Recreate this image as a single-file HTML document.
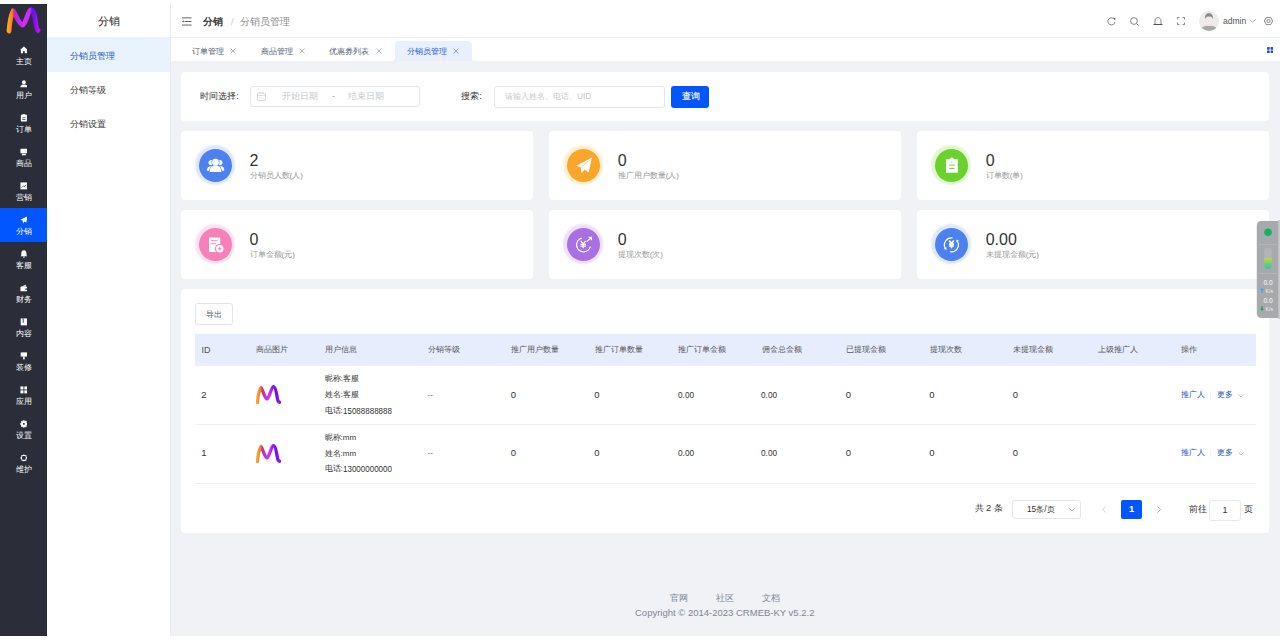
<!DOCTYPE html><html><head><meta charset="utf-8"><style>
*{box-sizing:border-box;margin:0;padding:0}
html,body{width:1280px;height:640px;overflow:hidden;background:#fff}
body{position:relative;font-family:"Liberation Sans",sans-serif;color:#333}
.a{position:absolute;white-space:nowrap}
.t{position:absolute;white-space:nowrap;line-height:1}
svg{display:block}
</style></head><body>
<div class="a" style="left:0;top:4px;width:47px;height:632px;background:#2b2e38"></div>
<svg class="a" style="left:4px;top:6px" width="40" height="30" viewBox="0 0 40 30">
<defs><linearGradient id="lg" gradientUnits="userSpaceOnUse" x1="5" y1="0" x2="34" y2="0">
<stop offset="0" stop-color="#ffa020"/><stop offset="0.12" stop-color="#f47a2a"/><stop offset="0.17" stop-color="#d42a80"/><stop offset="0.24" stop-color="#b824d8"/><stop offset="0.5" stop-color="#d42cff"/><stop offset="0.72" stop-color="#c828ff"/><stop offset="0.8" stop-color="#6412ee"/><stop offset="0.9" stop-color="#8010ee"/><stop offset="1" stop-color="#b812f4"/></linearGradient></defs>
<path d="M5 25 C5.5 18 7 9 9.25 4.75 C11.5 8 15 18.5 18.5 19 C22 18.5 24 4 27 3.75 C30 4 31 12 32 19 C32.5 22.5 33 24 34 24.5" fill="none" stroke="url(#lg)" stroke-width="4.8" stroke-linecap="round" stroke-linejoin="round"/>
</svg>
<svg class="a" style="left:19.7px;top:46px" width="7.8" height="7.8" viewBox="0 0 9 9"><path d="M4.5 0.5 L9 4.5 L8 4.5 L8 8.5 L5.5 8.5 L5.5 6 L3.5 6 L3.5 8.5 L1 8.5 L1 4.5 L0 4.5 Z" fill="#fff"/></svg>
<div class="t" style="left:0;width:47px;text-align:center;top:57.3px;font-size:8.3px;color:#fff">主页</div>
<svg class="a" style="left:19.7px;top:80px" width="7.8" height="7.8" viewBox="0 0 9 9"><circle cx="4.5" cy="2.6" r="2.2" fill="#fff"/><path d="M0.5 8.5 C0.5 5.8 2 5.2 4.5 5.2 C7 5.2 8.5 5.8 8.5 8.5 Z" fill="#fff"/></svg>
<div class="t" style="left:0;width:47px;text-align:center;top:91.3px;font-size:8.3px;color:#fff">用户</div>
<svg class="a" style="left:19.7px;top:114px" width="7.8" height="7.8" viewBox="0 0 9 9"><rect x="1" y="1" width="7" height="7.8" rx="0.8" fill="#fff"/><rect x="3" y="0.2" width="3" height="1.6" fill="#fff"/><rect x="2.6" y="4" width="3.8" height="0.8" fill="#2b2e38"/><rect x="2.6" y="5.8" width="3.8" height="0.8" fill="#2b2e38"/></svg>
<div class="t" style="left:0;width:47px;text-align:center;top:125.3px;font-size:8.3px;color:#fff">订单</div>
<svg class="a" style="left:19.7px;top:148px" width="7.8" height="7.8" viewBox="0 0 9 9"><rect x="0.5" y="0.8" width="8" height="5.4" rx="0.8" fill="#fff"/><rect x="2.2" y="6.6" width="4.6" height="1.8" fill="#fff"/></svg>
<div class="t" style="left:0;width:47px;text-align:center;top:159.3px;font-size:8.3px;color:#fff">商品</div>
<svg class="a" style="left:19.7px;top:182px" width="7.8" height="7.8" viewBox="0 0 9 9"><rect x="0.5" y="0.5" width="8" height="8" fill="#fff"/><path d="M2 6.5 L4 4.5 L5 5.5 L7 3" stroke="#2b2e38" stroke-width="0.8" fill="none"/></svg>
<div class="t" style="left:0;width:47px;text-align:center;top:193.3px;font-size:8.3px;color:#fff">营销</div>
<div class="a" style="left:0;top:208px;width:47px;height:34px;background:#0256ff"></div>
<svg class="a" style="left:19.7px;top:216px" width="7.8" height="7.8" viewBox="0 0 9 9"><path d="M8.8 0.3 L0.3 4.2 L3 5.3 L3.5 8.7 L5.2 6.3 L7.2 7.5 Z" fill="#fff"/></svg>
<div class="t" style="left:0;width:47px;text-align:center;top:227.3px;font-size:8.3px;color:#fff">分销</div>
<svg class="a" style="left:19.7px;top:250px" width="7.8" height="7.8" viewBox="0 0 9 9"><path d="M4.5 0.3 C6.8 0.3 7.5 2.3 7.5 4.3 L7.5 6.3 L8.6 7.3 L0.4 7.3 L1.5 6.3 L1.5 4.3 C1.5 2.3 2.2 0.3 4.5 0.3 Z" fill="#fff"/><rect x="3.5" y="7.6" width="2" height="1.1" fill="#fff"/></svg>
<div class="t" style="left:0;width:47px;text-align:center;top:261.3px;font-size:8.3px;color:#fff">客服</div>
<svg class="a" style="left:19.7px;top:284px" width="7.8" height="7.8" viewBox="0 0 9 9"><path d="M0.5 3.5 L6.5 0.8 L7.2 3 Z" fill="#fff"/><rect x="0.5" y="3.3" width="8" height="5.2" rx="0.6" fill="#fff"/><rect x="6" y="5.2" width="2.5" height="1.4" fill="#2b2e38"/></svg>
<div class="t" style="left:0;width:47px;text-align:center;top:295.3px;font-size:8.3px;color:#fff">财务</div>
<svg class="a" style="left:19.7px;top:318px" width="7.8" height="7.8" viewBox="0 0 9 9"><rect x="0.8" y="0.5" width="7.4" height="8" fill="#fff"/><rect x="3.2" y="0.5" width="1" height="5" fill="#2b2e38"/></svg>
<div class="t" style="left:0;width:47px;text-align:center;top:329.3px;font-size:8.3px;color:#fff">内容</div>
<svg class="a" style="left:19.7px;top:352px" width="7.8" height="7.8" viewBox="0 0 9 9"><rect x="0.8" y="0.5" width="7.4" height="4.8" fill="#fff"/><rect x="3.6" y="5.3" width="1.8" height="3.2" fill="#fff"/></svg>
<div class="t" style="left:0;width:47px;text-align:center;top:363.3px;font-size:8.3px;color:#fff">装修</div>
<svg class="a" style="left:19.7px;top:386px" width="7.8" height="7.8" viewBox="0 0 9 9"><rect x="0.5" y="0.5" width="3.5" height="3.5" fill="#fff"/><rect x="5" y="0.5" width="3.5" height="3.5" fill="#fff"/><rect x="0.5" y="5" width="3.5" height="3.5" fill="#fff"/><rect x="5" y="5" width="3.5" height="3.5" fill="#fff"/></svg>
<div class="t" style="left:0;width:47px;text-align:center;top:397.3px;font-size:8.3px;color:#fff">应用</div>
<svg class="a" style="left:19.7px;top:420px" width="7.8" height="7.8" viewBox="0 0 9 9"><path d="M4.5 0.2 L5.6 1.3 L7.3 1.2 L7.4 2.9 L8.8 4.5 L7.4 6.1 L7.3 7.8 L5.6 7.7 L4.5 8.8 L3.4 7.7 L1.7 7.8 L1.6 6.1 L0.2 4.5 L1.6 2.9 L1.7 1.2 L3.4 1.3 Z" fill="#fff" stroke="#fff" stroke-width="0.6" stroke-linejoin="round"/><circle cx="4.5" cy="4.5" r="1.1" fill="#2b2e38"/></svg>
<div class="t" style="left:0;width:47px;text-align:center;top:431.3px;font-size:8.3px;color:#fff">设置</div>
<svg class="a" style="left:19.7px;top:454px" width="7.8" height="7.8" viewBox="0 0 9 9"><path d="M4.5 0.2 L5.6 1.3 L7.3 1.2 L7.4 2.9 L8.8 4.5 L7.4 6.1 L7.3 7.8 L5.6 7.7 L4.5 8.8 L3.4 7.7 L1.7 7.8 L1.6 6.1 L0.2 4.5 L1.6 2.9 L1.7 1.2 L3.4 1.3 Z" fill="#fff"/><rect x="2.4" y="2.4" width="4.2" height="4.2" rx="1" fill="#22264a"/></svg>
<div class="t" style="left:0;width:47px;text-align:center;top:465.3px;font-size:8.3px;color:#fff">维护</div>
<div class="a" style="left:170px;top:4px;width:1px;height:632px;background:#e8eaec"></div>
<div class="t" style="left:47px;width:123px;text-align:center;top:16px;font-size:10.67px;color:#222">分销</div>
<div class="a" style="left:47px;top:37px;width:123px;height:35px;background:#e9f3fd"></div>
<div class="t" style="left:70.3px;top:51.8px;font-size:9.33px;color:#2156c4">分销员管理</div>
<div class="t" style="left:70.3px;top:85.8px;font-size:9.33px;color:#333">分销等级</div>
<div class="t" style="left:70.3px;top:119.8px;font-size:9.33px;color:#333">分销设置</div>
<div class="a" style="left:171px;top:37px;width:1109px;height:1px;background:#eceef1"></div>
<svg class="a" style="left:182px;top:17px" width="10" height="9" viewBox="0 0 10 9"><rect x="0" y="0.4" width="9.5" height="0.9" fill="#555"/><rect x="2.5" y="4" width="7" height="0.9" fill="#555"/><path d="M0 4.45 L1.8 3.3 L1.8 5.6 Z" fill="#555"/><rect x="0" y="7.6" width="9.5" height="0.9" fill="#555"/></svg>
<div class="t" style="left:203px;top:17px;font-size:9.5px;font-weight:bold;color:#3a3a3a">分销</div>
<div class="t" style="left:231px;top:17px;font-size:9.5px;color:#c5c8ce">/</div>
<div class="t" style="left:240px;top:17.2px;font-size:9.5px;color:#8c8c8c">分销员管理</div>
<svg class="a" style="left:1107px;top:17px" width="9" height="9" viewBox="0 0 9 9"><path d="M7.6 2.6 A3.6 3.6 0 1 0 8 5" fill="none" stroke="#666" stroke-width="0.8"/><path d="M6.2 0.8 L8.4 1.0 L8.1 3.2 Z" fill="#666"/></svg>
<svg class="a" style="left:1130px;top:17px" width="9" height="9" viewBox="0 0 9 9"><circle cx="4" cy="4" r="3.4" fill="none" stroke="#666" stroke-width="0.8"/><path d="M6.5 6.5 L8.5 8.5" stroke="#666" stroke-width="0.8"/></svg>
<svg class="a" style="left:1153px;top:17px" width="10" height="9" viewBox="0 0 10 9"><path d="M2 7.2 L2 4.2 C2 2 3.2 0.6 5 0.6 C6.8 0.6 8 2 8 4.2 L8 7.2" fill="none" stroke="#666" stroke-width="0.8"/><rect x="0.5" y="7" width="9" height="1" fill="#555"/></svg>
<svg class="a" style="left:1177px;top:17px" width="8" height="8" viewBox="0 0 8 8"><path d="M0.4 2.5 L0.4 0.4 L2.5 0.4 M5.5 0.4 L7.6 0.4 L7.6 2.5 M7.6 5.5 L7.6 7.6 L5.5 7.6 M2.5 7.6 L0.4 7.6 L0.4 5.5" fill="none" stroke="#666" stroke-width="0.8"/></svg>
<svg class="a" style="left:1199px;top:11px" width="20" height="20" viewBox="0 0 20 20">
<defs><clipPath id="av"><circle cx="10" cy="10" r="10"/></clipPath></defs>
<g clip-path="url(#av)"><rect width="20" height="20" fill="#ececec"/>
<ellipse cx="10" cy="20" rx="9" ry="5.5" fill="#a8a8a8"/>
<rect x="7.2" y="11" width="5.6" height="4" fill="#f2e4e4"/>
<ellipse cx="10" cy="9" rx="3.8" ry="4.6" fill="#f4e8e8"/>
<path d="M6 8 C5.8 3.5 7.5 2.2 10 2.2 C12.5 2.2 14.2 3.5 14 8 C13 6 12 5.6 10 5.6 C8 5.6 7 6 6 8 Z" fill="#8a8a8a"/>
</g></svg>
<div class="t" style="left:1223px;top:17px;font-size:8.5px;color:#555">admin</div>
<svg class="a" style="left:1249px;top:19px" width="7" height="4" viewBox="0 0 7 4"><path d="M0.4 0.4 L3.5 3.4 L6.6 0.4" fill="none" stroke="#999" stroke-width="0.7"/></svg>
<svg class="a" style="left:1264px;top:17px" width="9" height="8" viewBox="0 0 9 8"><path d="M2.3 0.4 L6.7 0.4 L8.6 4 L6.7 7.6 L2.3 7.6 L0.4 4 Z" fill="none" stroke="#666" stroke-width="0.8"/><circle cx="4.5" cy="4" r="1.6" fill="none" stroke="#666" stroke-width="0.8"/></svg>
<div class="t" style="left:192px;top:46.5px;font-size:8.3px;color:#515a6e">订单管理</div>
<svg class="a" style="left:230px;top:48px" width="6" height="6" viewBox="0 0 6 6"><path d="M0.5 0.5 L5.5 5.5 M5.5 0.5 L0.5 5.5" stroke="#999" stroke-width="0.7"/></svg>
<div class="t" style="left:260.5px;top:46.5px;font-size:8.3px;color:#515a6e">商品管理</div>
<svg class="a" style="left:299px;top:48px" width="6" height="6" viewBox="0 0 6 6"><path d="M0.5 0.5 L5.5 5.5 M5.5 0.5 L0.5 5.5" stroke="#999" stroke-width="0.7"/></svg>
<div class="t" style="left:329px;top:46.5px;font-size:8.3px;color:#515a6e">优惠券列表</div>
<svg class="a" style="left:376px;top:48px" width="6" height="6" viewBox="0 0 6 6"><path d="M0.5 0.5 L5.5 5.5 M5.5 0.5 L0.5 5.5" stroke="#999" stroke-width="0.7"/></svg>
<svg class="a" style="left:391px;top:41px" width="85" height="20" viewBox="0 0 85 20"><path d="M0 20 C3 20 4 19 4 16 L4 4 C4 1.5 5.5 0 8 0 L77 0 C79.5 0 81 1.5 81 4 L81 16 C81 19 82 20 85 20 Z" fill="#e8f0fe"/></svg>
<div class="t" style="left:407px;top:46.5px;font-size:8.3px;color:#1a5ad8">分销员管理</div>
<svg class="a" style="left:453px;top:48px" width="6" height="6" viewBox="0 0 6 6"><path d="M0.5 0.5 L5.5 5.5 M5.5 0.5 L0.5 5.5" stroke="#5b86e0" stroke-width="0.7"/></svg>
<svg class="a" style="left:1266.5px;top:46.5px" width="6.3" height="6.3" viewBox="0 0 7 7"><rect x="0" y="0" width="3" height="3" rx="0.5" fill="#1a4fd0"/><rect x="4" y="0" width="3" height="3" rx="0.5" fill="#1a4fd0"/><rect x="0" y="4" width="3" height="3" rx="0.5" fill="#1a4fd0"/><rect x="4" y="4" width="3" height="3" rx="0.5" fill="#1a4fd0"/></svg>
<div class="a" style="left:171px;top:61px;width:1109px;height:575px;background:#f0f2f5"></div>
<div class="a" style="left:181px;top:72px;width:1088px;height:48.5px;background:#fff;border-radius:4px"></div>
<div class="t" style="left:200.3px;top:91.8px;font-size:8.6px;color:#333">时间选择:</div>
<div class="a" style="left:249.5px;top:86px;width:170px;height:21px;border:1px solid #e3e5e8;border-radius:3px;background:#fff"></div>
<svg class="a" style="left:257px;top:92px" width="9" height="9" viewBox="0 0 9 9"><rect x="0.5" y="1" width="8" height="7.5" rx="0.5" fill="none" stroke="#cfd1d5" stroke-width="0.8"/><rect x="0.5" y="3" width="8" height="0.7" fill="#cfd1d5"/><rect x="2" y="5.6" width="5" height="0.6" fill="#dcdee2"/><rect x="2.5" y="0" width="0.7" height="2" fill="#cfd1d5"/><rect x="5.8" y="0" width="0.7" height="2" fill="#cfd1d5"/></svg>
<div class="t" style="left:281.5px;top:92px;font-size:8.8px;color:#c5c8ce">开始日期</div>
<div class="t" style="left:332px;top:92px;font-size:8.8px;color:#999">-</div>
<div class="t" style="left:348px;top:92px;font-size:8.8px;color:#c5c8ce">结束日期</div>
<div class="t" style="left:461.3px;top:91.8px;font-size:8.6px;color:#333">搜索:</div>
<div class="a" style="left:494px;top:86px;width:170.5px;height:21.5px;border:1px solid #e3e5e8;border-radius:3px;background:#fff"></div>
<div class="t" style="left:505px;top:92px;font-size:8.3px;color:#c5c8ce">请输入姓名、电话、UID</div>
<div class="a" style="left:671px;top:86px;width:38px;height:21.5px;background:#0256ff;border-radius:3px"></div>
<div class="t" style="left:682px;top:92px;font-size:8.6px;color:#fff;-webkit-text-stroke:0.15px #fff">查询</div>
<div class="a" style="left:181px;top:131px;width:351.6px;height:68.5px;background:#fff;border-radius:4px"></div>
<div class="a" style="left:196px;top:146.3px;width:38px;height:38px;border-radius:50%;background:#dfe8fd;box-shadow:0 0 2px 1px #dfe8fd"></div>
<svg class="a" style="left:198.5px;top:148.8px" width="33" height="33" viewBox="0 0 33 33"><circle cx="16.5" cy="16.5" r="16.5" fill="#4d80f1"/><circle cx="12.2" cy="13.6" r="2.7" fill="#fff"/><path d="M7.799999999999999 21.8 C7.799999999999999 18.4 9.78 17.2 12.2 17.2 C14.62 17.2 16.6 17.2 16.6 21.8 Z" fill="#fff"/><circle cx="20.8" cy="13.6" r="2.7" fill="#fff"/><path d="M16.4 21.8 C16.4 18.4 18.38 17.2 20.8 17.2 C23.220000000000002 17.2 25.200000000000003 17.2 25.200000000000003 21.8 Z" fill="#fff"/><circle cx="16.5" cy="13.2" r="3.4" fill="#fff" stroke="#4d80f1" stroke-width="1.2"/><path d="M10.7 23.0 C10.7 17.8 13.31 16.6 16.5 16.6 C19.69 16.6 22.3 18.4 22.3 23.0 Z" fill="#fff" stroke="#4d80f1" stroke-width="1.2"/><circle cx="16.5" cy="13.2" r="3.4" fill="#fff"/><path d="M10.7 23.0 C10.7 17.8 13.31 16.6 16.5 16.6 C19.69 16.6 22.3 18.4 22.3 23.0 Z" fill="#fff"/></svg>
<div class="t" style="left:249.5px;top:153px;font-size:16px;color:#333">2</div>
<div class="t" style="left:249.5px;top:172px;font-size:8px;color:#999">分销员人数(人)</div>
<div class="a" style="left:549.2px;top:131px;width:351.6px;height:68.5px;background:#fff;border-radius:4px"></div>
<div class="a" style="left:564.2px;top:146.3px;width:38px;height:38px;border-radius:50%;background:#fff0d0;box-shadow:0 0 2px 1px #fff0d0"></div>
<svg class="a" style="left:566.7px;top:148.8px" width="33" height="33" viewBox="0 0 33 33"><circle cx="16.5" cy="16.5" r="16.5" fill="#f9a62a"/><path d="M25 8.6 L9.3 16.8 L13.8 18.6 L14.6 24.3 L17.6 20.6 L21.6 23.4 Z" fill="#fff"/><path d="M13.8 18.6 L22.5 11" stroke="#f9a62a" stroke-width="0.5"/></svg>
<div class="t" style="left:617.7px;top:153px;font-size:16px;color:#333">0</div>
<div class="t" style="left:617.7px;top:172px;font-size:8px;color:#999">推广用户数量(人)</div>
<div class="a" style="left:917.2px;top:131px;width:351.6px;height:68.5px;background:#fff;border-radius:4px"></div>
<div class="a" style="left:932.2px;top:146.3px;width:38px;height:38px;border-radius:50%;background:#e2f6d5;box-shadow:0 0 2px 1px #e2f6d5"></div>
<svg class="a" style="left:934.7px;top:148.8px" width="33" height="33" viewBox="0 0 33 33"><circle cx="16.5" cy="16.5" r="16.5" fill="#6bd12e"/><path d="M11 10.2 L14.3 10.2 L16.9 8.2 L19.5 10.2 L22.8 10.2 L22.8 23.8 L11 23.8 Z" fill="#fff"/><rect x="14.2" y="15.6" width="5.4" height="0.9" fill="#6bd12e"/><rect x="14.2" y="19" width="5.4" height="0.9" fill="#6bd12e"/><rect x="16.5" y="12" width="0.8" height="1.4" fill="#6bd12e"/></svg>
<div class="t" style="left:985.7px;top:153px;font-size:16px;color:#333">0</div>
<div class="t" style="left:985.7px;top:172px;font-size:8px;color:#999">订单数(单)</div>
<div class="a" style="left:181px;top:210px;width:351.6px;height:68.5px;background:#fff;border-radius:4px"></div>
<div class="a" style="left:196px;top:225.3px;width:38px;height:38px;border-radius:50%;background:#fde2ef;box-shadow:0 0 2px 1px #fde2ef"></div>
<svg class="a" style="left:198.5px;top:227.8px" width="33" height="33" viewBox="0 0 33 33"><circle cx="16.5" cy="16.5" r="16.5" fill="#f780b8"/><rect x="10" y="9.4" width="11.2" height="14.6" rx="0.5" fill="#fff"/><rect x="11.8" y="12.3" width="7" height="0.9" fill="#f780b8"/><rect x="11.8" y="15.3" width="5" height="0.9" fill="#f780b8"/><circle cx="20.8" cy="20.8" r="4.9" fill="#f780b8"/><circle cx="20.8" cy="20.8" r="3.7" fill="#fff"/><path d="M19 20.8 L22.6 20.8 M20.8 19 L20.8 22.6" stroke="#f780b8" stroke-width="1"/></svg>
<div class="t" style="left:249.5px;top:232px;font-size:16px;color:#333">0</div>
<div class="t" style="left:249.5px;top:251px;font-size:8px;color:#999">订单金额(元)</div>
<div class="a" style="left:549.2px;top:210px;width:351.6px;height:68.5px;background:#fff;border-radius:4px"></div>
<div class="a" style="left:564.2px;top:225.3px;width:38px;height:38px;border-radius:50%;background:#eee0fb;box-shadow:0 0 2px 1px #eee0fb"></div>
<svg class="a" style="left:566.7px;top:227.8px" width="33" height="33" viewBox="0 0 33 33"><circle cx="16.5" cy="16.5" r="16.5" fill="#a970e6"/><path d="M14.79 10.04 A7.0 7.0 0 1 0 23.36 18.61" fill="none" stroke="#fff" stroke-width="1.3"/><path d="M19.6 13.6 L24.2 9.6 M21.6 9.3 L24.4 9.4 L24.3 12.2" fill="none" stroke="#fff" stroke-width="1.2"/><path d="M13.700000000000001 12.9 L16.2 16.008 L18.7 12.9 M13.4 16.304000000000002 L19.0 16.304000000000002 M13.4 18.08 L19.0 18.08 M16.2 16.008 L16.2 20.3" fill="none" stroke="#fff" stroke-width="1.25"/></svg>
<div class="t" style="left:617.7px;top:232px;font-size:16px;color:#333">0</div>
<div class="t" style="left:617.7px;top:251px;font-size:8px;color:#999">提现次数(次)</div>
<div class="a" style="left:917.2px;top:210px;width:351.6px;height:68.5px;background:#fff;border-radius:4px"></div>
<div class="a" style="left:932.2px;top:225.3px;width:38px;height:38px;border-radius:50%;background:#dfe8fd;box-shadow:0 0 2px 1px #dfe8fd"></div>
<svg class="a" style="left:934.7px;top:227.8px" width="33" height="33" viewBox="0 0 33 33"><circle cx="16.5" cy="16.5" r="16.5" fill="#4d80f1"/><path d="M17.62 9.91 A7.0 7.0 0 0 0 10.34 20.30" fill="none" stroke="#fff" stroke-width="1.2"/><path d="M11.34 22.03 L8.80 20.84 L11.57 19.24 Z" fill="#fff"/><path d="M15.18 23.69 A7.0 7.0 0 0 0 22.46 13.30" fill="none" stroke="#fff" stroke-width="1.2"/><path d="M21.46 11.57 L24.00 12.76 L21.23 14.36 Z" fill="#fff"/><path d="M14.3 12.5 L16.5 15.776 L18.7 12.5 M14.0 16.088 L19.0 16.088 M14.0 17.96 L19.0 17.96 M16.5 15.776 L16.5 20.3" fill="none" stroke="#fff" stroke-width="1.6"/></svg>
<div class="t" style="left:985.7px;top:232px;font-size:16px;color:#333">0.00</div>
<div class="t" style="left:985.7px;top:251px;font-size:8px;color:#999">未提现金额(元)</div>
<div class="a" style="left:181px;top:289px;width:1088px;height:244px;background:#fff;border-radius:4px"></div>
<div class="a" style="left:195px;top:303px;width:37.5px;height:21.5px;border:1px solid #e3e5e8;border-radius:3px;background:#fff"></div>
<div class="t" style="left:206px;top:309.5px;font-size:8.3px;color:#515a6e">导出</div>
<div class="a" style="left:195px;top:334px;width:1061px;height:32px;background:#e6edfd"></div>
<div class="t" style="left:201.5px;top:345.6px;font-size:9px;color:#555">ID</div>
<div class="t" style="left:256px;top:346.3px;font-size:8.25px;color:#555">商品图片</div>
<div class="t" style="left:324.5px;top:346.3px;font-size:8.25px;color:#555">用户信息</div>
<div class="t" style="left:427.5px;top:346.3px;font-size:8.25px;color:#555">分销等级</div>
<div class="t" style="left:511px;top:346.3px;font-size:8.25px;color:#555">推广用户数量</div>
<div class="t" style="left:594.5px;top:346.3px;font-size:8.25px;color:#555">推广订单数量</div>
<div class="t" style="left:678px;top:346.3px;font-size:8.25px;color:#555">推广订单金额</div>
<div class="t" style="left:761.5px;top:346.3px;font-size:8.25px;color:#555">佣金总金额</div>
<div class="t" style="left:846px;top:346.3px;font-size:8.25px;color:#555">已提现金额</div>
<div class="t" style="left:929.5px;top:346.3px;font-size:8.25px;color:#555">提现次数</div>
<div class="t" style="left:1013px;top:346.3px;font-size:8.25px;color:#555">未提现金额</div>
<div class="t" style="left:1097.5px;top:346.3px;font-size:8.25px;color:#555">上级推广人</div>
<div class="t" style="left:1180.5px;top:346.3px;font-size:8.25px;color:#555">操作</div>
<div class="a" style="left:195px;top:424px;width:1061px;height:1px;background:#eef0f2"></div>
<div class="t" style="left:201.2px;top:389.8px;font-size:9.5px;color:#333">2</div>
<svg class="a" style="left:252px;top:384.3px" width="32" height="22" viewBox="0 0 32 22"><defs><linearGradient id="lg0" gradientUnits="userSpaceOnUse" x1="5.5" y1="0" x2="27.5" y2="0"><stop offset="0" stop-color="#f8a030"/><stop offset="0.15" stop-color="#ee7a38"/><stop offset="0.22" stop-color="#b83a7a"/><stop offset="0.32" stop-color="#c030d8"/><stop offset="0.55" stop-color="#d030f8"/><stop offset="0.7" stop-color="#8a1af0"/><stop offset="0.85" stop-color="#6a12e8"/><stop offset="1" stop-color="#9a14ea"/></linearGradient></defs>
<path d="M5.5 18.7 C5.8 13 7 6.5 9 3.6 C11 6 12.5 14 15 14.9 C17.5 14 19 3 21.5 2.5 C24 3 24.5 10 25.5 15 C26 17 26.8 18 27.5 18.2" fill="none" stroke="url(#lg0)" stroke-width="3.3" stroke-linecap="round" stroke-linejoin="round"/></svg>
<div class="t" style="left:324.5px;top:375.3px;font-size:8px;color:#333">昵称:客服</div>
<div class="t" style="left:324.5px;top:391.1px;font-size:8px;color:#333">姓名:客服</div>
<div class="t" style="left:324.5px;top:406.90000000000003px;font-size:8px;color:#333">电话:<span style="display:inline-block;font-size:9.3px;transform:scaleX(0.86);transform-origin:left;vertical-align:-0.6px">15088888888</span></div>
<div class="t" style="left:427.5px;top:390.8px;font-size:8px;color:#555">--</div>
<div class="t" style="left:510.7px;top:389.8px;font-size:9.5px;color:#333;">0</div>
<div class="t" style="left:594.2px;top:389.8px;font-size:9.5px;color:#333;">0</div>
<div class="t" style="left:677.7px;top:389.8px;font-size:9.5px;color:#333;transform:scaleX(0.87);transform-origin:left top;">0.00</div>
<div class="t" style="left:761.2px;top:389.8px;font-size:9.5px;color:#333;transform:scaleX(0.87);transform-origin:left top;">0.00</div>
<div class="t" style="left:845.7px;top:389.8px;font-size:9.5px;color:#333;">0</div>
<div class="t" style="left:929.2px;top:389.8px;font-size:9.5px;color:#333;">0</div>
<div class="t" style="left:1012.7px;top:389.8px;font-size:9.5px;color:#333;">0</div>
<div class="t" style="left:1180.5px;top:390.8px;font-size:8px;color:#2456c0">推广人</div>
<div class="a" style="left:1210px;top:391.8px;width:1px;height:7px;background:#f0f1f3"></div>
<div class="t" style="left:1216.5px;top:390.8px;font-size:8px;color:#2456c0">更多</div>
<svg class="a" style="left:1238px;top:393.8px" width="6" height="4" viewBox="0 0 6 4"><path d="M0.4 0.4 L3 3 L5.6 0.4" fill="none" stroke="#aab" stroke-width="0.7"/></svg>
<div class="a" style="left:195px;top:482.5px;width:1061px;height:1px;background:#eef0f2"></div>
<div class="t" style="left:201.2px;top:448.3px;font-size:9.5px;color:#333">1</div>
<svg class="a" style="left:252px;top:442.8px" width="32" height="22" viewBox="0 0 32 22"><defs><linearGradient id="lg1" gradientUnits="userSpaceOnUse" x1="5.5" y1="0" x2="27.5" y2="0"><stop offset="0" stop-color="#f8a030"/><stop offset="0.15" stop-color="#ee7a38"/><stop offset="0.22" stop-color="#b83a7a"/><stop offset="0.32" stop-color="#c030d8"/><stop offset="0.55" stop-color="#d030f8"/><stop offset="0.7" stop-color="#8a1af0"/><stop offset="0.85" stop-color="#6a12e8"/><stop offset="1" stop-color="#9a14ea"/></linearGradient></defs>
<path d="M5.5 18.7 C5.8 13 7 6.5 9 3.6 C11 6 12.5 14 15 14.9 C17.5 14 19 3 21.5 2.5 C24 3 24.5 10 25.5 15 C26 17 26.8 18 27.5 18.2" fill="none" stroke="url(#lg1)" stroke-width="3.3" stroke-linecap="round" stroke-linejoin="round"/></svg>
<div class="t" style="left:324.5px;top:433.8px;font-size:8px;color:#333">昵称:mm</div>
<div class="t" style="left:324.5px;top:449.6px;font-size:8px;color:#333">姓名:mm</div>
<div class="t" style="left:324.5px;top:465.40000000000003px;font-size:8px;color:#333">电话:<span style="display:inline-block;font-size:9.3px;transform:scaleX(0.86);transform-origin:left;vertical-align:-0.6px">13000000000</span></div>
<div class="t" style="left:427.5px;top:449.3px;font-size:8px;color:#555">--</div>
<div class="t" style="left:510.7px;top:448.3px;font-size:9.5px;color:#333;">0</div>
<div class="t" style="left:594.2px;top:448.3px;font-size:9.5px;color:#333;">0</div>
<div class="t" style="left:677.7px;top:448.3px;font-size:9.5px;color:#333;transform:scaleX(0.87);transform-origin:left top;">0.00</div>
<div class="t" style="left:761.2px;top:448.3px;font-size:9.5px;color:#333;transform:scaleX(0.87);transform-origin:left top;">0.00</div>
<div class="t" style="left:845.7px;top:448.3px;font-size:9.5px;color:#333;">0</div>
<div class="t" style="left:929.2px;top:448.3px;font-size:9.5px;color:#333;">0</div>
<div class="t" style="left:1012.7px;top:448.3px;font-size:9.5px;color:#333;">0</div>
<div class="t" style="left:1180.5px;top:449.3px;font-size:8px;color:#2456c0">推广人</div>
<div class="a" style="left:1210px;top:450.3px;width:1px;height:7px;background:#f0f1f3"></div>
<div class="t" style="left:1216.5px;top:449.3px;font-size:8px;color:#2456c0">更多</div>
<svg class="a" style="left:1238px;top:452.3px" width="6" height="4" viewBox="0 0 6 4"><path d="M0.4 0.4 L3 3 L5.6 0.4" fill="none" stroke="#aab" stroke-width="0.7"/></svg>
<div class="t" style="left:974.5px;top:504px;font-size:9.33px;color:#333">共 2 条</div>
<div class="a" style="left:1012px;top:500px;width:69px;height:19px;border:1px solid #e3e5e8;border-radius:3px;background:#fff"></div>
<div class="t" style="left:1027px;top:505px;font-size:8.3px;color:#333">15条/页</div>
<svg class="a" style="left:1069px;top:508px" width="6" height="4" viewBox="0 0 6 4"><path d="M0.4 0.4 L3 3 L5.6 0.4" fill="none" stroke="#999" stroke-width="0.7"/></svg>
<svg class="a" style="left:1102px;top:505.5px" width="4" height="7" viewBox="0 0 4 7"><path d="M3.6 0.4 L0.6 3.5 L3.6 6.6" fill="none" stroke="#c5c8ce" stroke-width="0.8"/></svg>
<div class="a" style="left:1121px;top:500px;width:21px;height:18.5px;background:#0256ff;border-radius:2px"></div>
<div class="t" style="left:1121px;width:21px;text-align:center;top:504.5px;font-size:9.33px;font-weight:bold;color:#fff">1</div>
<svg class="a" style="left:1157px;top:505.5px" width="4" height="7" viewBox="0 0 4 7"><path d="M0.4 0.4 L3.4 3.5 L0.4 6.6" fill="none" stroke="#999" stroke-width="0.8"/></svg>
<div class="t" style="left:1189px;top:505px;font-size:9px;color:#333">前往</div>
<div class="a" style="left:1209px;top:500px;width:31.5px;height:21px;border:1px solid #e6e8eb;border-radius:3px;background:#fff"></div>
<div class="t" style="left:1209.5px;width:31px;text-align:center;top:505.5px;font-size:9px;color:#333">1</div>
<div class="t" style="left:1243.5px;top:505px;font-size:9px;color:#333">页</div>
<div class="t" style="left:669.5px;top:593.5px;font-size:9px;color:#808695">官网</div>
<div class="t" style="left:715.5px;top:593.5px;font-size:9px;color:#808695">社区</div>
<div class="t" style="left:762px;top:593.5px;font-size:9px;color:#808695">文档</div>
<div class="t" style="left:635px;top:607.5px;font-size:9.5px;color:#808695">Copyright © 2014-2023 CRMEB-KY v5.2.2</div>
<svg class="a" style="left:1256px;top:220px" width="24" height="99" viewBox="0 0 24 99">
<defs><linearGradient id="bat" x1="0" y1="0" x2="0" y2="1"><stop offset="0" stop-color="#b8d848"/><stop offset="1" stop-color="#3cc0a0"/></linearGradient></defs>
<rect x="0.8" y="1" width="30" height="97" rx="4.5" fill="#a8a9ac"/>
<rect x="22.3" y="0" width="1.7" height="99" fill="#c9cacd"/>
<circle cx="12" cy="12.2" r="3.8" fill="#17b062"/>
<rect x="2.5" y="24" width="19" height="0.6" fill="#bcbdc0"/>
<rect x="8.2" y="28" width="7.6" height="21" rx="2.2" fill="#b3b4b7"/>
<path d="M8.2 38 L15.8 38 L15.8 46.5 C15.8 48 14.6 49 12 49 C9.4 49 8.2 48 8.2 46.5 Z" fill="url(#bat)"/>
<rect x="2.5" y="53" width="19" height="0.6" fill="#bcbdc0"/>
<text x="12" y="65.3" font-family="Liberation Sans" font-size="6.6" fill="#fff" text-anchor="middle">0.0</text>
<path d="M6 67.8 L7.9 70 L6.7 70 L6.7 72.6 L5.3 72.6 L5.3 70 L4.1 70 Z" fill="#3aa0f0"/>
<text x="9.5" y="72.5" font-family="Liberation Sans" font-size="5.2" fill="#eee">K/s</text>
<text x="12" y="83.3" font-family="Liberation Sans" font-size="6.6" fill="#fff" text-anchor="middle">0.0</text>
<path d="M6 91 L7.9 88.8 L6.7 88.8 L6.7 86.2 L5.3 86.2 L5.3 88.8 L4.1 88.8 Z" fill="#16a050"/>
<text x="9.5" y="90.5" font-family="Liberation Sans" font-size="5.2" fill="#eee">K/s</text>
</svg>
</body></html>
